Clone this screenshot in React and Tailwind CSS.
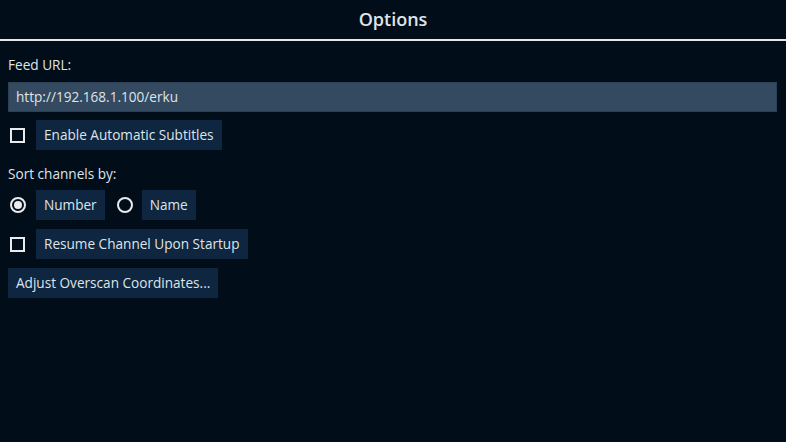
const font = { fontFamily: '"Open Sans", "Liberation Sans", sans-serif' };

const Check = () => (
  <span className="ml-[2px] mr-[11px] block h-[15px] w-[15px] border-2 border-[#e8ecef]" />
);

const Radio = ({ on, className }) => (
  <span
    className={`flex h-[16px] w-[16px] items-center justify-center rounded-full border-2 border-[#e8ecef] ${className}`}
  >
    {on && <span className="h-[8px] w-[8px] rounded-full bg-[#e8ecef]" />}
  </span>
);

const Btn = ({ children }) => (
  <span className="flex h-[30px] items-center bg-[#0f2640] px-[8px] text-[13.6px] text-[#dfe4e8]">
    {children}
  </span>
);

export default function App() {
  return (
    <div
      className="flex h-[442px] w-[786px] flex-col bg-[#020d1a] text-[#dfe4e8]"
      style={font}
    >
      <div className="flex h-[41px] items-center justify-center border-b-2 border-[#e6e6e6] text-[18px] font-semibold">
        Options
      </div>
      <div className="flex flex-col px-[8px] pt-[15px]">
        <div className="h-[18px] text-[13.6px] leading-[18px]">Feed URL:</div>
        <div className="mr-[1px] mt-[8px] flex h-[30px] items-center border border-[#2c4156] bg-[#344a60] px-[7px] text-[13.6px]">
          http://192.168.1.100/erku
        </div>
        <div className="mt-[8px] flex items-center">
          <Check />
          <Btn>Enable Automatic Subtitles</Btn>
        </div>
        <div className="mt-[15px] h-[18px] text-[13.6px] leading-[18px]">
          Sort channels by:
        </div>
        <div className="mt-[7px] flex items-center">
          <Radio on className="ml-[2px] mr-[10px]" />
          <Btn>Number</Btn>
          <Radio className="ml-[12px] mr-[9px]" />
          <Btn>Name</Btn>
        </div>
        <div className="mt-[9px] flex items-center">
          <Check />
          <Btn>Resume Channel Upon Startup</Btn>
        </div>
        <div className="mt-[9px] flex">
          <Btn>Adjust Overscan Coordinates...</Btn>
        </div>
      </div>
    </div>
  );
}
